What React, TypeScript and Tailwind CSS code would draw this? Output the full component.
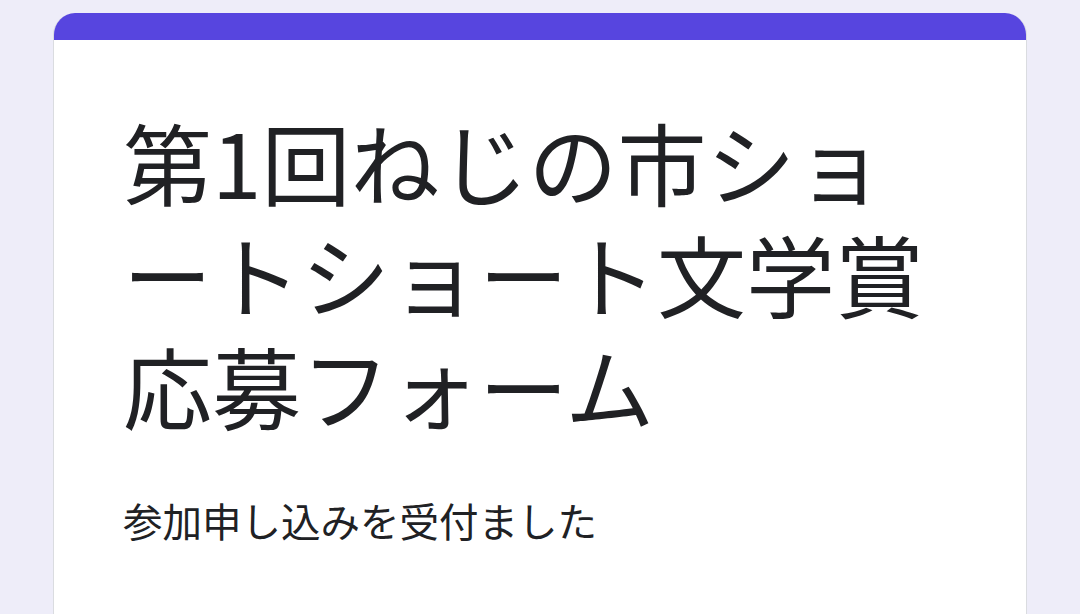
export default function App() {
  return (
    <div className="min-h-screen h-[614px] overflow-hidden bg-[#eeedf9] pt-[13px] px-[53px]">
      <div className="w-[974px] rounded-t-[22px] overflow-hidden bg-white border-x border-[#dadce0] h-[640px]">
        {/* Accent bar */}
        <div className="h-[27px] bg-[#5745df] -mx-px" />

        <div
          className="pl-[69px] pr-[60px] pt-[65px] text-[#202124]"
          style={{ fontFamily: '"Noto Sans CJK JP", "Noto Sans", sans-serif' }}
        >
          <h1 className="text-[89px] leading-[112px] font-normal">
            第1回ねじの市ショートショート文学賞応募フォーム
          </h1>
          <p className="mt-[51px] text-[39.5px] leading-[55px]">
            参加申し込みを受付ました
          </p>
        </div>
      </div>
    </div>
  );
}
